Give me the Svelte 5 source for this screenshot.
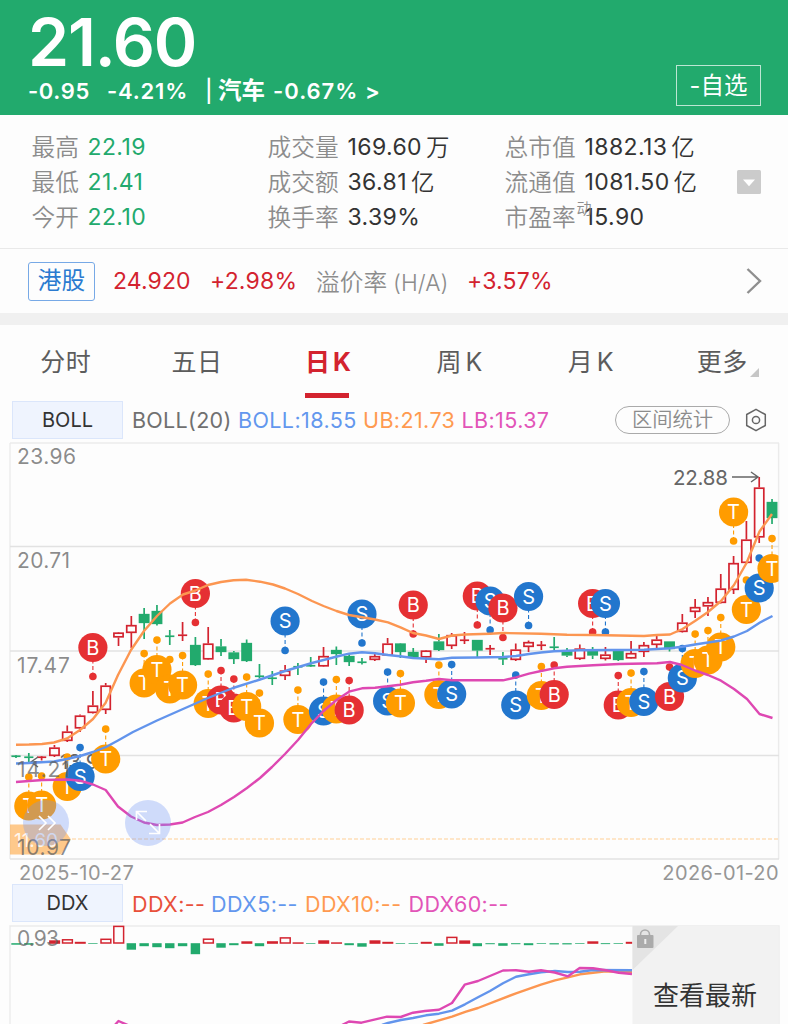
<script lang="ts">
  type Point = [number, number];
  type Side = 'B' | 'S' | 'T';

  const stats = [
    [
      { label: '最高', value: '22.19', down: true },
      { label: '最低', value: '21.41', down: true },
      { label: '今开', value: '22.10', down: true },
    ],
    [
      { label: '成交量', value: '169.60', unit: '万' },
      { label: '成交额', value: '36.81', unit: '亿' },
      { label: '换手率', value: '3.39%' },
    ],
    [
      { label: '总市值', value: '1882.13', unit: '亿' },
      { label: '流通值', value: '1081.50', unit: '亿' },
      { label: '市盈率', value: '15.90', sup: '动' },
    ],
  ];

  const tabs = ['分时', '五日', '日 K', '周 K', '月 K', '更多'];
  let activeTab = $state(2);

  const x = (i: number) => 16 + i * 12.814;

  // high, body top, body bottom, low, rising
  const candles: [number, number, number, number, boolean][] = [
    [755, 755.5, 757, 758, false],
    [753, 756.5, 758, 762, false],
    [756, 756.5, 758, 760.5, true],
    [745, 747.5, 756, 757, true],
    [725.5, 731.5, 741, 742, true],
    [714.5, 715.5, 728.5, 732, true],
    [691, 705.5, 713, 713.5, true],
    [683, 685.5, 710, 714, true],
    [632, 632.5, 637.5, 646, true],
    [616, 625, 633, 648, true],
    [608, 614, 623, 639, false],
    [605, 611, 624, 625.5, false],
    [630, 635.5, 637, 645, false],
    [622, 634.5, 636, 641, true],
    [637, 645, 665, 666, false],
    [627, 643.5, 659.5, 660, true],
    [639, 646.5, 652, 656, false],
    [651, 652.5, 659, 664, false],
    [639.5, 643, 661, 662, false],
    [664, 675.5, 677, 678.5, false],
    [671, 677.5, 679, 685, false],
    [665, 670.5, 676, 680, true],
    [663, 666, 667.5, 675, false],
    [657, 665, 666.5, 667, false],
    [647, 656, 666.5, 667, true],
    [646.5, 650, 654, 665, false],
    [654, 656, 662, 666, false],
    [658, 661.5, 663, 664.5, false],
    [652, 656, 660, 661, true],
    [638, 643.5, 655.5, 656, true],
    [643, 643.5, 652, 658, false],
    [648, 652, 657.5, 659, false],
    [650, 650.5, 657.5, 663, true],
    [634, 641.5, 650, 651, false],
    [633, 635, 646, 649, true],
    [632, 639.5, 641, 644, true],
    [640, 640, 650.5, 658, false],
    [645, 648, 649.5, 655, true],
    [652, 658, 659.5, 665, false],
    [643.5, 649.5, 660, 661, true],
    [640.5, 642, 647, 652, true],
    [641, 644.5, 646, 650, true],
    [637, 646.5, 648, 650, false],
    [648, 651, 655.5, 657, false],
    [644.5, 648.5, 659, 660, true],
    [647, 651, 655.5, 659, false],
    [647, 654.5, 659, 660.5, true],
    [651, 651, 660, 661, false],
    [641, 653, 658.5, 659, true],
    [642, 645, 652, 657, true],
    [636, 639.5, 645, 648, true],
    [641.5, 641.5, 649, 651.5, false],
    [614, 622.5, 632, 632.5, true],
    [599, 607, 612, 618, true],
    [597, 602, 606.5, 616, true],
    [574, 588.5, 603, 603.5, true],
    [556, 563, 590, 594, true],
    [521, 539.5, 563, 563.5, true],
    [477, 487.5, 537.5, 543, true],
    [499, 502, 518, 524, false],
  ];

  // candle index, side, badge y, dot y
  const signals: [number, Side, number, number][] = [
    [1, 'T', 806, 777], [2, 'T', 805, 776], [4, 'T', 786.5, 757], [5, 'S', 776.5, 747.5],
    [6, 'B', 647.5, 676.5], [7, 'T', 759, 729], [10, 'T', 683, 653.5], [11, 'T', 669.5, 640],
    [12, 'T', 689, 659.5], [13, 'T', 685, 655.5], [14, 'B', 593.5, 622.5], [15, 'T', 703.5, 674],
    [16, 'B', 700, 670.5], [17, 'B', 708, 679], [18, 'T', 706.5, 677], [19, 'T', 723, 693],
    [21, 'S', 621, 650.5], [22, 'T', 719.5, 690], [24, 'S', 711, 682], [25, 'T', 709, 679.5],
    [26, 'B', 710, 680.5], [27, 'S', 614, 643], [29, 'S', 701, 672], [30, 'T', 703, 673.5],
    [31, 'B', 605, 634], [33, 'T', 694.5, 665], [34, 'S', 694, 664.5], [36, 'B', 596, 625],
    [37, 'S', 601, 630], [38, 'B', 608, 637.5], [39, 'S', 705, 675], [40, 'S', 596.5, 625.5],
    [41, 'T', 695.5, 666.5], [42, 'B', 694.5, 665], [45, 'B', 603.5, 632], [46, 'S', 603.5, 632],
    [47, 'B', 705, 675.5], [48, 'T', 702.5, 673], [49, 'S', 701.5, 671.5], [51, 'B', 696.5, 667],
    [52, 'S', 678, 648.5], [53, 'T', 663.5, 634], [54, 'T', 660, 630.5], [55, 'T', 647, 617.5],
    [56, 'T', 512, 541], [57, 'T', 609.5, 580], [58, 'S', 588, 558], [59, 'T', 568.5, 538.5],
  ];

  const upper: Point[] = [
    [16, 744.7], [29, 744.5], [42, 744], [54, 742.5], [67, 738.5], [80, 730], [93, 719], [105.5, 703],
    [118, 675], [131, 650], [144, 631], [157, 616], [170, 603.5], [183, 594.5], [195.4, 590.5],
    [208, 585], [221, 582], [233.5, 580.2], [246, 579.7], [260, 581.7], [273, 584.5], [285, 588.5],
    [298, 594], [312, 601], [323.5, 606], [336.5, 611], [349, 615], [362, 617.3], [375, 619.5],
    [388, 622.3], [400.5, 627.3], [413, 633], [426, 635.5], [439, 639], [452, 635.5], [465, 634.5],
    [490, 633.7], [503, 633], [541, 633.7], [567, 634.8], [593, 635], [644, 636], [657, 635],
    [670, 634.5], [682.5, 629], [695, 621], [708, 612], [721, 601], [734, 585], [746.5, 563],
    [759.5, 531.5], [772, 514],
  ];
  const middle: Point[] = [
    [16, 763.5], [29, 763], [54, 761.5], [67, 759], [80, 756], [93, 752], [106, 747], [118, 740.5],
    [133, 732], [157, 720.5], [183, 709], [208, 698], [233, 688], [260, 679.5], [285, 671],
    [312, 663], [337, 656.5], [349, 653.7], [362, 652.3], [375, 653.3], [388, 655], [400, 656.3],
    [413, 658], [439, 659.3], [452, 657.7], [477, 657.5], [503, 657], [516, 656], [529, 654],
    [541, 652.5], [554, 651.3], [580, 650.3], [644, 649.7], [670, 648.3], [682, 646.7],
    [695, 644.5], [708, 642.5], [721, 640.5], [734, 636.5], [747, 631], [760, 622.5], [772.5, 616],
  ];
  const lower: Point[] = [
    [16, 782], [29, 781], [43, 780], [68, 779.5], [80, 780.7], [93, 784.5], [105.7, 790], [118, 806.5],
    [131, 816.5], [144, 822.5], [157, 825], [170, 824.5], [182.6, 822.5], [195, 817], [208, 812],
    [221, 805], [234, 797], [247, 788], [260, 778], [272, 767], [285, 754], [298, 740], [311, 724],
    [323.5, 711], [336.5, 700], [349, 691.7], [362, 688.3], [375, 687.7], [388, 686.3], [400, 684.7],
    [413, 682.3], [426, 680.8], [439, 679], [452, 680.3], [503, 680.3], [516, 677.3], [529, 673.7],
    [541, 671], [554, 668.3], [567, 666.7], [593, 665.3], [619, 664], [657, 663.3], [670, 662],
    [682, 665], [695, 670.5], [708, 675], [721, 680.7], [734, 689], [747, 699], [759.5, 714], [772.5, 718],
  ];

  // positive bars rise above the zero line
  const ddx = [
    -1.5, -1.5, 0, 3.5, 3.6, 2, -0.7, 4.1, 17, -6.5, -3, -4, -5, -3, -11, 4.2, -4.5, -2, 2.5, -3,
    2.6, 5.5, 1.5, -0.7, 3.5, 1.5, -2, -3.5, 3.5, 2, -0.7, -0.7, 2, -2.6, 6, 3.4, -3, -1, -2.6, -1,
    -2, -0.7, -1.2, -1.2, -0.7, 2.5, -0.9, -0.7, 2,
  ];
  const ddx5: Point[] = [
    [382, 1025], [388, 1023], [401, 1020], [413, 1018], [426, 1015.3], [439, 1013.7], [452, 1010.7],
    [465, 1004.3], [478, 997.3], [490, 991], [503, 983.3], [516, 976.7], [529, 974.3], [541, 972.3],
    [555, 971], [568, 972], [580, 971.8], [593, 970], [632, 970.3],
  ];
  const ddx10: Point[] = [
    [423, 1025], [452, 1016.7], [466, 1011.7], [478, 1008], [516, 993.3], [541, 984.7], [555, 980.3],
    [568, 977.3], [580, 974.3], [593, 972.7], [606, 971.3], [632, 971.7],
  ];
  const ddx60a: Point[] = [[114, 1026], [118.5, 1021], [130, 1026]];
  const ddx60: Point[] = [
    [342, 1025], [349, 1021.5], [361.5, 1022.7], [387, 1016.7], [400.7, 1017], [413, 1012.7],
    [425, 1011], [439, 1009.7], [452, 1003], [464.7, 984.7], [478, 981], [503, 970.5], [516, 970.3],
    [529, 971.7], [541, 970.3], [554.7, 972.5], [568, 976.3], [579.7, 968], [593, 968.3],
    [606, 970.3], [618.7, 972.7], [632, 974],
  ];

  const scale: [string, number][] = [
    ['23.96', 463.5], ['20.71', 568], ['17.47', 672.5], ['14.21', 777], ['10.97', 855],
  ];

  const points = (list: Point[]) => list.map((p) => p.join(',')).join(' ');
</script>

<header>
  <div class="quote">
    <div class="price">21.60</div>
    <div class="change">
      <span class="diff">-0.95</span>
      <span class="pct">-4.21%</span>
      <span class="bar">|</span>
      <span class="sector">汽车</span>
      <span class="sector-pct">-0.67%</span>
      <span>&gt;</span>
    </div>
  </div>
  <button class="watch">-自选</button>
</header>

<section class="stats">
  {#each stats as column, c}
    <div class="column">
      {#each column as stat}
        <div class="stat">
          <span class="label" class:wide={c > 0}>{stat.label}{#if stat.sup}<sup>{stat.sup}</sup>{/if}</span>
          <span class="value" class:down={stat.down}>{stat.value}</span>
          {#if stat.unit}<span class="unit">{stat.unit}</span>{/if}
        </div>
      {/each}
    </div>
  {/each}
  <svg class="expand" viewBox="0 0 24 24">
    <rect width="24" height="24" rx="1.5" fill="#cbcbcb" />
    <path d="M6 9.5h12l-6 6.7z" fill="#fff" />
  </svg>
</section>

<section class="hk">
  <span class="tag">港股</span>
  <span class="hk-price">24.920</span>
  <span class="hk-pct">+2.98%</span>
  <span class="premium">溢价率<i>(H/A)</i></span>
  <span class="hk-premium">+3.57%</span>
  <svg class="chevron" viewBox="0 0 16 28">
    <path d="M1.5 2 14 14 1.5 26" fill="none" stroke="#8f8f8f" stroke-width="2.4" />
  </svg>
</section>

<nav>
  {#each tabs as tab, i}
    <button class:active={i === activeTab} onclick={() => (activeTab = i)}>
      {tab}{#if i === 5}<svg viewBox="0 0 9 9"><path d="M9 0v9H0z" fill="#c6c6c6" /></svg>{/if}
    </button>
  {/each}
</nav>

<div class="indicator">
  <button class="picker">BOLL</button>
  <div class="legend boll">
    <span class="grey">BOLL(20)</span>
    <span class="blue">BOLL:18.55</span>
    <span class="orange">UB:21.73</span>
    <span class="pink">LB:15.37</span>
  </div>
  <button class="range">区间统计</button>
  <svg class="gear" viewBox="0 0 22 24" fill="none" stroke="#666" stroke-width="1.5">
    <path d="M11 1.3 20.3 6.5v11L11 22.7 1.7 17.5v-11z" stroke-linejoin="round" />
    <circle cx="11" cy="12" r="3.6" />
  </svg>
</div>

<svg class="chart" viewBox="0 440 788 421" height="421">
  <defs>
    <clipPath id="plot"><rect x="10" y="443" width="768.5" height="416" /></clipPath>
  </defs>
  <g fill="none" stroke="#e2e2e2" stroke-width="1.4">
    <path d="M10 443H779M10 443V859M778.6 443V859" stroke="#ebebeb" />
    <path d="M10 546.5H779M10 651H779M10 755.5H779M10 859H779" />
  </g>

  <g clip-path="url(#plot)">
    {#each candles as [high, top, bottom, low, rising], i}
      <g class={rising ? 'rise' : 'fall'}>
        <path d="M{x(i)} {high}V{top}M{x(i)} {bottom}V{low}" />
        {#if bottom - top < 2}
          <path d="M{x(i) - 4.6} {(top + bottom) / 2}h9.2" />
          <path d="M{x(i)} {top}V{bottom}" />
        {:else}
          <rect x={x(i) - 4.6} y={top + 0.7} width="9.2" height={bottom - top - 1.4} />
        {/if}
      </g>
    {/each}

    <g class="note">
      <text x="673" y="484.5" textLength="55">22.88</text>
      <path d="M732 477h26M751 472l7 5-7 5" />
      <text x="60" y="769" textLength="51">13.99</text>
      <path d="M56 762H31M38 757l-7 5 7 5" />
    </g>

    {#each signals as [i, side, y, dot]}
      <g class="signal {side}">
        <path d="M{x(i)} {dot}V{y}" />
        <circle cx={x(i)} cy={dot} r="3.8" />
        <circle cx={x(i)} cy={y} r="14.6" />
        <text x={x(i)} y={y + 7.3}>{side}</text>
      </g>
    {/each}

    <polyline class="line orange" points={points(upper)} />
    <polyline class="line blue" points={points(middle)} />
    <polyline class="line pink" points={points(lower)} />
  </g>

  <path d="M72 839H779" stroke="#ffcf96" stroke-width="1.2" stroke-dasharray="4 2" />
  <path d="M10 824.5H60.5L71 839.5 60.5 854.5H10z" fill="#ff9f2e" fill-opacity="0.55" />
  <text class="tag-price" x="14" y="846.5" textLength="44">11.60</text>
  <g class="scale">
    {#each scale as [label, y]}
      <text x="17" {y} textLength={label === '10.97' ? 54 : label === '23.96' ? 59 : 53}>{label}</text>
    {/each}
  </g>
  <g class="control">
    <circle cx="46" cy="823" r="23" />
    <path d="M39 816l7 7-7 7M48 816l7 7-7 7" />
    <circle cx="148" cy="823" r="23" />
    <path d="M146 821 137 812M136.5 820V811.5H147M150 824l9 9M159.5 824V833.5H149" />
  </g>
</svg>

<div class="dates"><span>2025-10-27</span><span>2026-01-20</span></div>

<div class="indicator second">
  <button class="picker">DDX</button>
  <div class="legend ddx">
    <span class="red">DDX:--</span>
    <span class="blue">DDX5:--</span>
    <span class="orange">DDX10:--</span>
    <span class="pink">DDX60:--</span>
  </div>
</div>

<svg class="chart" viewBox="0 924 788 100" height="100">
  <defs>
    <clipPath id="sub"><rect x="10" y="924" width="622.5" height="100" /></clipPath>
  </defs>
  <path d="M10 1024V926H779V1024" fill="none" stroke="#ebebeb" stroke-width="1.4" />
  <g clip-path="url(#sub)">
    {#each ddx as v, i}
      {#if v > 3.55}
        <rect x={x(i) - 4.7} y={943.4 - v} width="9.8" height={v - 0.4} fill="none" stroke="#d3232f" stroke-width="1.5" />
      {:else if v > 0}
        <rect x={x(i) - 5.3} y={943.8 - v} width="11" height={v} fill="#d3232f" />
      {:else}
        <rect x={x(i) - 4.7} y="943.2" width="9.4" height={-v} fill="#22aa6d" />
      {/if}
    {/each}
    <polyline class="line orange" points={points(ddx10)} />
    <polyline class="line blue" points={points(ddx5)} />
    <polyline class="line pink" points={points(ddx60a)} />
    <polyline class="line pink" points={points(ddx60)} />
  </g>
  <text class="ddx-max" x="17" y="946" textLength="42">0.93</text>
  <rect x="632.5" y="926" width="146" height="98" fill="#f2f2f2" />
  <path d="M632.5 926H678L632.5 970z" fill="#e4e4e4" />
  <path d="M640.5 936V934.5a4.5 4.5 0 0 1 9 0V936" fill="none" stroke="#ababab" stroke-width="1.6" />
  <rect x="637" y="935" width="16.5" height="13" rx="1" fill="#ababab" />
  <rect x="644.3" y="939" width="2" height="5" fill="#eee" />
  <text class="latest" x="653" y="1005" textLength="104">查看最新</text>
</svg>

<style>
  :global(body) {
    background: #fdfdfd;
    overflow: hidden;
  }
  :global(#app) {
    width: 788px;
    height: 1024px;
    overflow: hidden;
    font-family: Inter, 'Noto Sans CJK SC', sans-serif;
    color: #333;
  }
  button {
    font: inherit;
    color: inherit;
    background: none;
    border: none;
    padding: 0;
    cursor: pointer;
  }
  header {
    box-sizing: border-box;
    height: 115px;
    padding: 10px 27px 0 28px;
    display: flex;
    justify-content: space-between;
    background: #22aa6d;
    color: #fff;
  }
  .price {
    font-size: 66px;
    line-height: 65px;
    font-weight: 600;
    letter-spacing: -1.2px;
  }
  .change {
    display: flex;
    height: 32px;
    line-height: 32px;
    font-size: 22px;
    font-weight: 600;
    white-space: nowrap;
  }
  .diff {
    width: 79px;
    letter-spacing: 0.6px;
  }
  .pct {
    width: 98px;
    letter-spacing: 0.8px;
  }
  .bar {
    width: 13px;
    font-weight: 500;
  }
  .sector {
    width: 55px;
    font-size: 23.5px;
  }
  .sector-pct {
    width: 92px;
    letter-spacing: 1px;
  }
  .watch {
    box-sizing: border-box;
    width: 85px;
    height: 41px;
    margin-top: 55px;
    border: 1.5px solid rgba(255, 255, 255, 0.7);
    font-size: 23.5px;
    line-height: 36px;
  }
  .stats {
    box-sizing: border-box;
    height: 134px;
    padding: 15px 27px 0 31.5px;
    display: grid;
    grid-template-columns: 236px 237px 1fr 24px;
    border-bottom: 1.5px solid #e9e9e9;
  }
  .stat {
    display: flex;
    height: 35px;
    line-height: 35px;
    font-size: 23px;
    white-space: nowrap;
  }
  .label {
    position: relative;
    width: 56px;
    font-size: 23.7px;
    font-weight: 350;
    color: #8c8c8c;
  }
  .label.wide {
    width: 80px;
  }
  sup {
    position: absolute;
    left: 72px;
    top: 0;
    font-size: 15px;
    line-height: 18px;
  }
  .value {
    letter-spacing: 0.4px;
  }
  .value.down {
    color: #22aa6d;
  }
  .unit {
    margin-left: 4px;
    font-size: 23.5px;
    font-weight: 350;
  }
  .expand {
    width: 24px;
    height: 24px;
    margin-top: 40px;
  }
  .hk {
    height: 64px;
    padding: 0 26px 0 28px;
    display: flex;
    align-items: center;
    font-size: 23px;
    color: #d3232f;
    border-bottom: 12px solid #f0f0f0;
    white-space: nowrap;
  }
  .tag {
    box-sizing: border-box;
    width: 67px;
    height: 39px;
    margin-right: 18px;
    border: 1.5px solid #77a9e6;
    border-radius: 3px;
    color: #2b7bd0;
    text-align: center;
    font-size: 23.7px;
    line-height: 36px;
  }
  .hk-price {
    width: 97px;
    letter-spacing: 0.1px;
  }
  .hk-pct {
    width: 106px;
    letter-spacing: 0.2px;
  }
  .premium {
    width: 151px;
    color: #8c8c8c;
    font-size: 23.7px;
    font-weight: 350;
  }
  .premium i {
    margin-left: 6px;
    font-style: normal;
    font-size: 22.7px;
  }
  .hk-premium {
    letter-spacing: 0.2px;
  }
  .chevron {
    width: 16px;
    height: 28px;
    margin-left: auto;
  }
  nav {
    height: 73px;
    display: flex;
  }
  nav button {
    position: relative;
    width: 132px;
    height: 73px;
    line-height: 74px;
    font-size: 25px;
    color: #5c5c5c;
    word-spacing: -4px;
    letter-spacing: 0.5px;
  }
  nav button.active {
    color: #d3232f;
    font-weight: 700;
  }
  nav button.active::after {
    content: '';
    position: absolute;
    left: 42.5px;
    bottom: 0;
    width: 44px;
    height: 5.5px;
    background: #d3232f;
  }
  nav svg {
    position: absolute;
    width: 9px;
    height: 9px;
    right: 29px;
    bottom: 21px;
  }
  .indicator {
    box-sizing: border-box;
    height: 42px;
    padding: 3px 21px 0 12px;
    display: flex;
    align-items: flex-start;
    font-size: 21.5px;
  }
  .picker {
    box-sizing: border-box;
    width: 111px;
    height: 38px;
    border: 1.5px solid #dbe6fb;
    background: #eff4fe;
    font-size: 20px;
    line-height: 35px;
  }
  .legend {
    display: flex;
    padding-left: 9px;
    line-height: 39px;
    letter-spacing: 0.4px;
    white-space: nowrap;
  }
  .boll span:nth-child(1) {
    width: 106px;
    letter-spacing: 0.3px;
  }
  .boll span:nth-child(2) {
    width: 125px;
  }
  .boll span:nth-child(3) {
    width: 98.5px;
  }
  .ddx span:nth-child(1) {
    width: 79px;
  }
  .ddx span:nth-child(2) {
    width: 94px;
  }
  .ddx span:nth-child(3) {
    width: 103.5px;
  }
  span.grey {
    color: #707070;
  }
  span.red {
    color: #e8503a;
  }
  span.blue {
    color: #6297ee;
  }
  span.orange {
    color: #ff9a50;
  }
  span.pink {
    color: #e254b8;
  }
  .range {
    box-sizing: border-box;
    width: 115px;
    height: 28px;
    margin: 5px 15px 0 auto;
    border: 1.5px solid #aaa;
    border-radius: 14px;
    color: #8c8c8c;
    font-size: 20.3px;
    font-weight: 350;
    line-height: 24px;
  }
  .gear {
    width: 22px;
    height: 24px;
    margin-top: 7px;
  }
  .chart {
    display: block;
    width: 788px;
  }
  .rise {
    fill: #fdfdfd;
    stroke: #d3232f;
    stroke-width: 1.7;
  }
  .fall {
    fill: #22aa6d;
    stroke: #22aa6d;
    stroke-width: 1.7;
  }
  .note text {
    font-size: 20.5px;
    fill: #666;
  }
  .note path {
    fill: none;
    stroke: #666;
    stroke-width: 1.5;
  }
  .signal text {
    fill: #fff;
    font-size: 20px;
    text-anchor: middle;
  }
  .signal path {
    stroke-width: 1.1;
    stroke-dasharray: 4 2.5;
  }
  .B {
    fill: #e53033;
    stroke: #e53033;
  }
  .S {
    fill: #2276cd;
    stroke: #2276cd;
  }
  .T {
    fill: #ff9c00;
    stroke: #ff9c00;
  }
  .signal circle,
  .signal text {
    stroke: none;
  }
  .line {
    fill: none;
    stroke-width: 2.4;
    stroke-linejoin: round;
  }
  .line.orange {
    stroke: #fc9651;
  }
  .line.blue {
    stroke: #6294ec;
  }
  .line.pink {
    stroke: #de48b2;
  }
  .scale text,
  .ddx-max {
    fill: #5f5f5f;
    fill-opacity: 0.72;
    font-size: 21px;
  }
  .tag-price {
    fill: #fff;
    fill-opacity: 0.85;
    font-size: 19px;
  }
  .control circle {
    fill: #7398f5;
    fill-opacity: 0.33;
  }
  .control path {
    fill: none;
    stroke: #fff;
    stroke-width: 1.7;
  }
  .dates {
    height: 20px;
    padding: 0 9px 0 19px;
    display: flex;
    justify-content: space-between;
    line-height: 24px;
    font-size: 20px;
    letter-spacing: 0.4px;
    color: #969696;
  }
  .second {
    height: 43px;
  }
  .second .legend {
    line-height: 40px;
  }
  .latest {
    fill: #333;
    font-size: 26px;
  }
</style>
